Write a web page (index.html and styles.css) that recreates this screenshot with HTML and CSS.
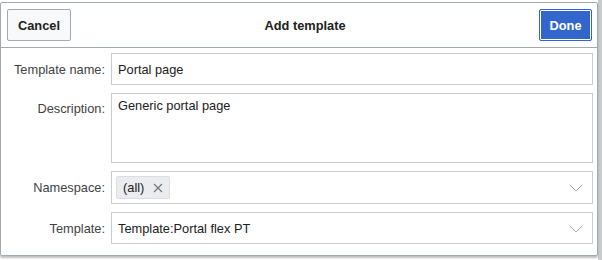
FILE: index.html
```html
<!DOCTYPE html>
<html lang="en">
<head>
    <meta charset="UTF-8">
    <title>Add template</title>
    <link rel="stylesheet" href="styles.css">
</head>
<body>
    <div class="backdrop">
        <div class="dialog">
            <div class="dialog-head">
                <button class="btn btn-cancel">Cancel</button>
                <div class="dialog-title">Add template</div>
                <button class="btn btn-done">Done</button>
            </div>

            <div class="dialog-body">
                <div class="row">
                    <label class="row-label">Template name:</label>
                    <div class="field">Portal page</div>
                </div>
                <div class="row row-top">
                    <label class="row-label">Description:</label>
                    <div class="field field-area">Generic portal page</div>
                </div>
                <div class="row">
                    <label class="row-label">Namespace:</label>
                    <div class="field field-select field-tags">
                        <span class="tag"><span class="tag-text">(all)</span>
                            <svg class="tag-x" width="10" height="10" viewBox="0 0 10 10"><path d="M1 1L9 9M9 1L1 9" stroke="#72777d" stroke-width="1.2"/></svg>
                        </span>
                        <svg class="chevron" width="14" height="8" viewBox="0 0 14 8"><path d="M1 1L7 7L13 1" fill="none" stroke="#a2a9b1" stroke-width="1"/></svg>
                    </div>
                </div>
                <div class="row">
                    <label class="row-label">Template:</label>
                    <div class="field field-select field-plain">Template:Portal flex PT
                        <svg class="chevron" width="14" height="8" viewBox="0 0 14 8"><path d="M1 1L7 7L13 1" fill="none" stroke="#a2a9b1" stroke-width="1"/></svg>
                    </div>
                </div>
            </div>
        </div>
    </div>
</body>
</html>
```

FILE: styles.css
```css
/* page */
body {
    margin: 0;
    font-family: 'Liberation Sans', Arial, sans-serif;
    font-size: 12.8px;
    color: #202122;
    background: #f8f9fa;
}

.backdrop {
    padding-top: 2px;
    height: 258px;
    background: linear-gradient(to right, #fff 0, #fff 598px, #c8ccd1 598px);
}

/* dialog box */
.dialog {
    width: 598px;
    height: 254px;
    box-sizing: border-box;
    background: white;
    border: 1px solid #a2a9b1;
    border-radius: 2px;
    box-shadow: 0 2px 2px rgba(0,0,0,0.25);
}

.dialog-head {
    display: flex;
    align-items: center;
    justify-content: space-between;
    height: 44px;
    padding: 0 5px 0 6px;
    border-bottom: 1px solid #a2a9b1;
}

.dialog-title {
    font-weight: bold;
    flex: 1;
    text-align: center;
}

.btn {
    height: 32px;
    padding: 0;
    border-radius: 2px;
    font-family: inherit;
    font-size: 12.8px;
    font-weight: bold;
}

.btn-cancel {
    width: 64px;
    background: #f8f9fa;
    border: 1px solid #a2a9b1;
    color: #202122;
}

.btn-done {
    width: 53px;
    background: #3366cc;
    border: 1px solid #3366cc;
    box-shadow: inset 0 0 0 1px #fff;
    color: white;
}

/* form rows */
.dialog-body {
    padding: 5px 4px 0 0;
    display: flex;
    flex-direction: column;
    gap: 8px;
}

.row {
    display: flex;
    align-items: center;
}

.row-top {
    align-items: flex-start;
}

.row-top .row-label {
    padding-top: 8px;
}

.row-label {
    width: 104px;
    text-align: right;
    padding-right: 6px;
    color: #404244;
}

.field {
    flex: 1;
    height: 32px;
    box-sizing: border-box;
    border: 1px solid #c8ccd1;
    padding: 0 6px;
    display: flex;
    align-items: center;
    color: #202122;
}

.field-area {
    height: 70px;
    align-items: flex-start;
    padding-top: 4px;
}

.field-select {
    position: relative;
    height: 33px;
}

.field-plain {
    height: 32px;
}

.field-tags {
    padding-left: 4px;
}

.chevron {
    position: absolute;
    right: 9px;
    top: 12px;
}

.tag {
    display: flex;
    align-items: center;
    gap: 9px;
    height: 23px;
    box-sizing: border-box;
    padding: 0 6px;
    background: #eaecf0;
    border: 1px solid #dadde3;
    border-radius: 2px;
}

.tag-text {
    color: #202122;
}
```
